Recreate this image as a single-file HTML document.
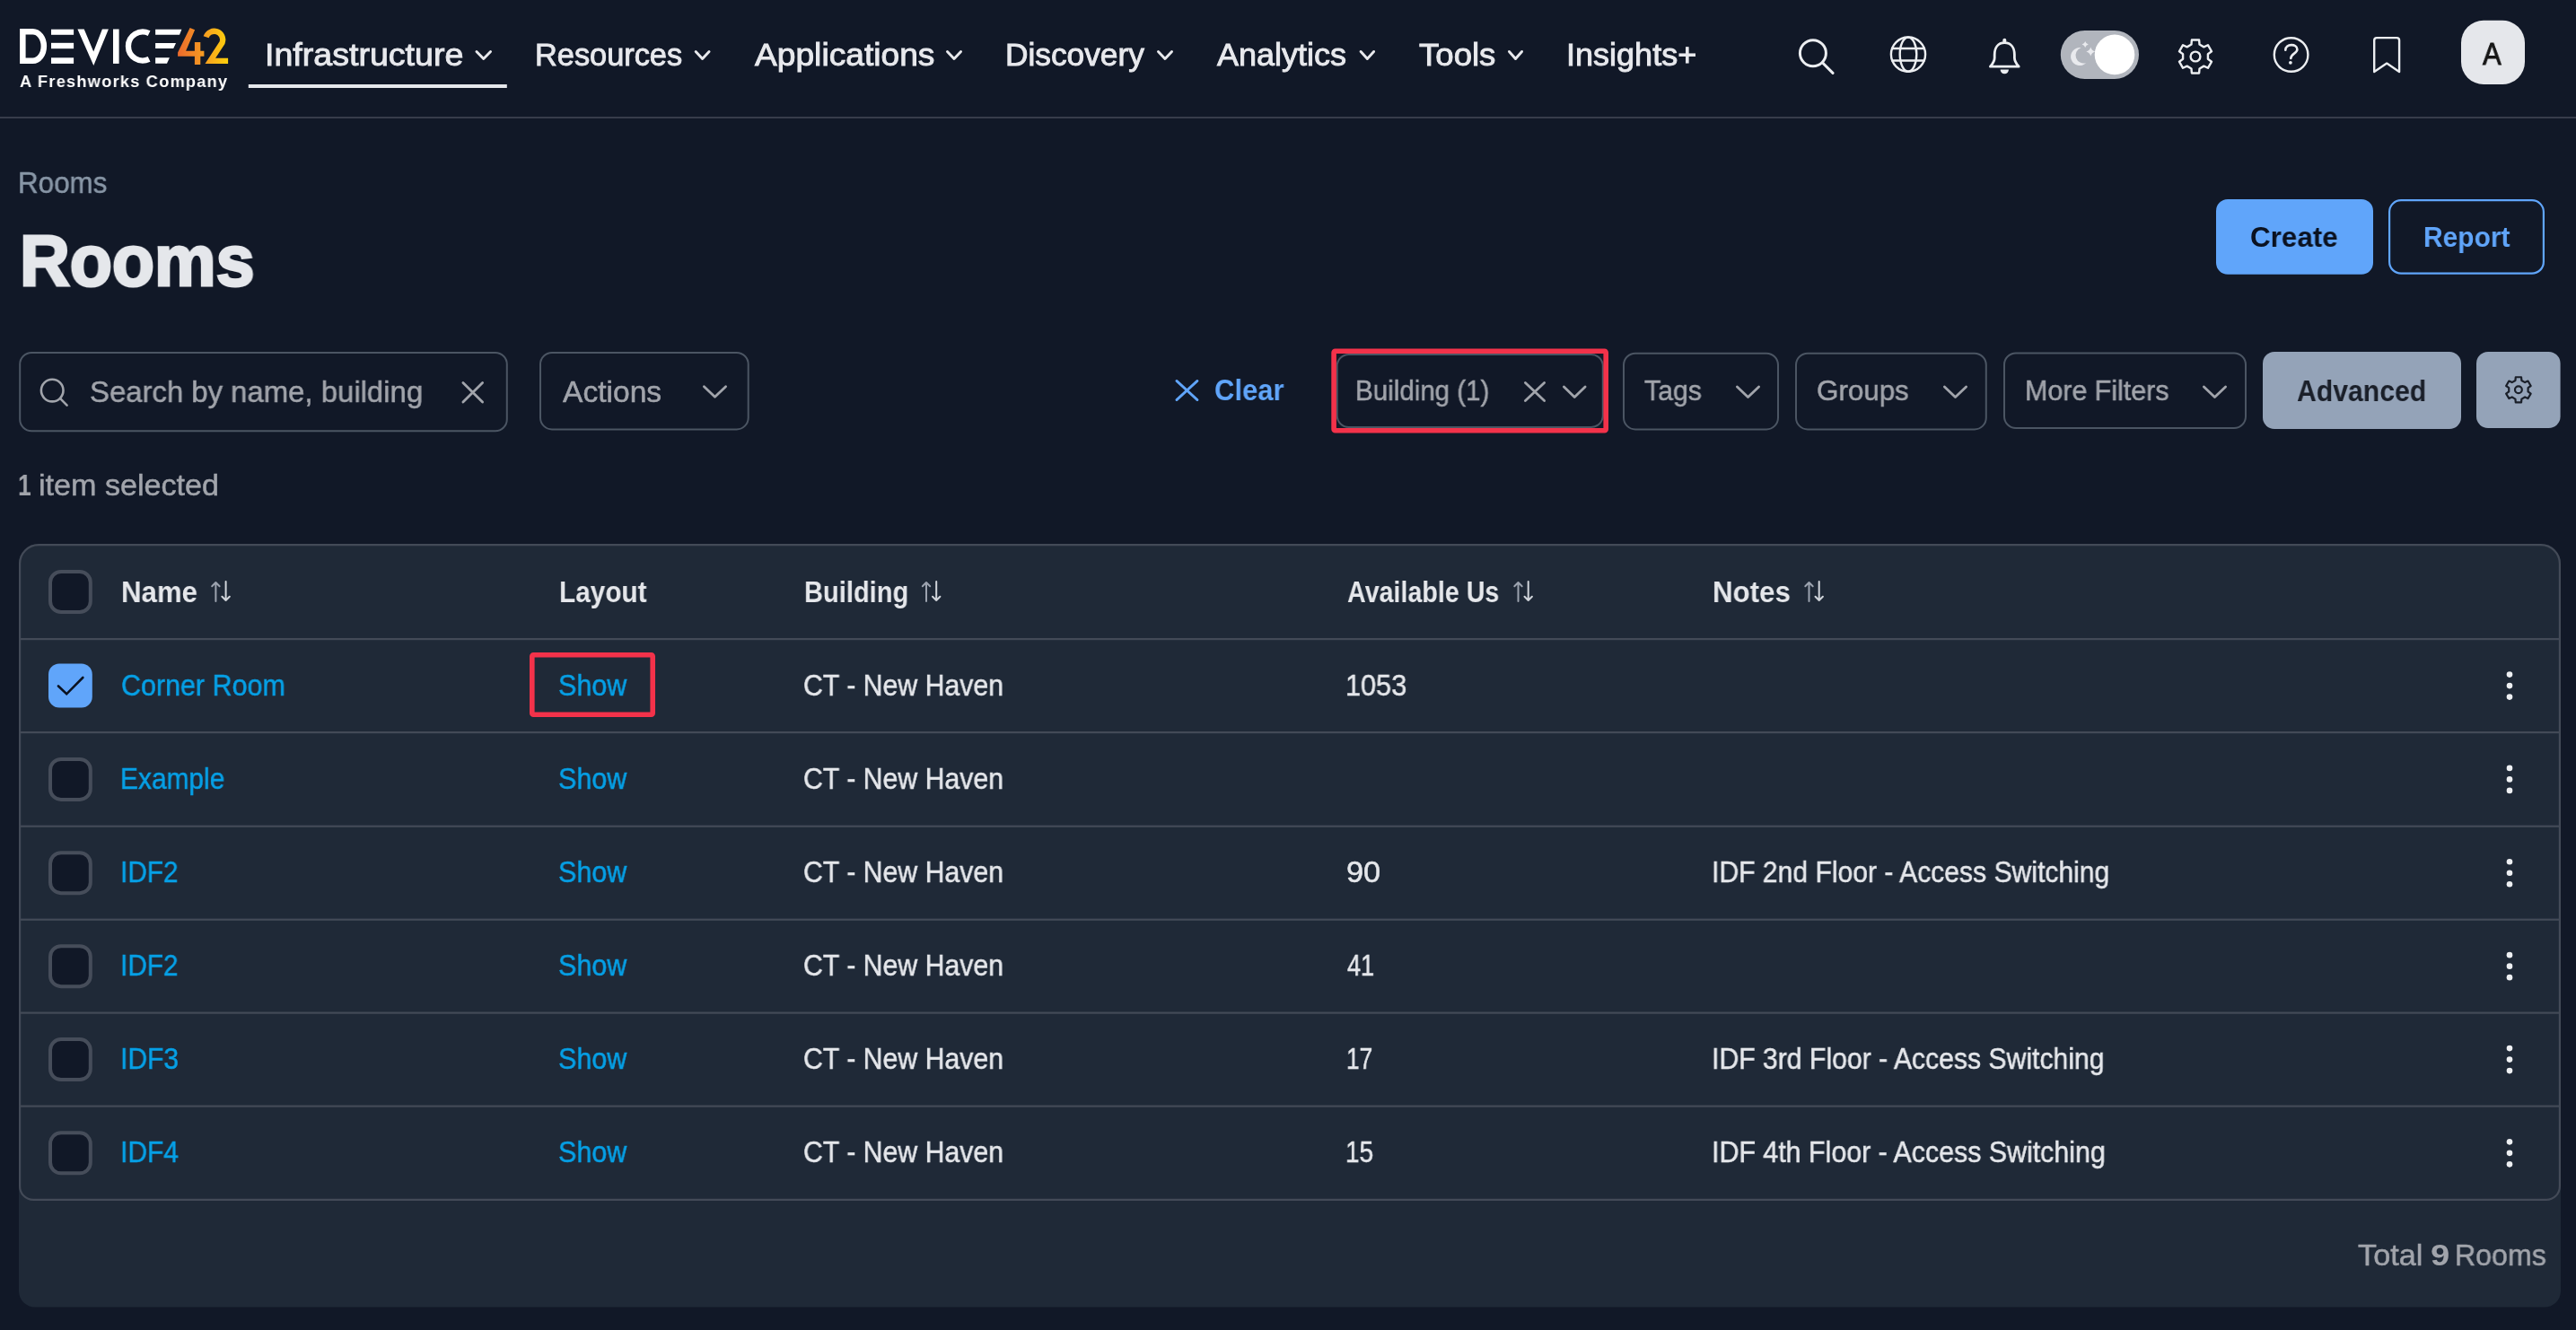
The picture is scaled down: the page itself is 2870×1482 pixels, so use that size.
<!DOCTYPE html>
<html><head><meta charset="utf-8"><title>Rooms</title>
<style>
html,body{margin:0;padding:0;background:#111827;width:2870px;height:1482px;overflow:hidden}
body{position:relative;font-family:"Liberation Sans",sans-serif}
svg.bg{position:absolute;left:0;top:0}
.t{position:absolute;white-space:nowrap;transform-origin:0 0;will-change:transform}
</style></head><body>
<svg class="bg" width="2870" height="1482" viewBox="0 0 2870 1482">
<rect x="0" y="130" width="2870" height="2" rx="0" fill="#373c4a"/>
<defs><linearGradient id="g42" x1="198" y1="0" x2="254" y2="0" gradientUnits="userSpaceOnUse"><stop offset="0" stop-color="#ec6a2c"/><stop offset="0.5" stop-color="#f59a22"/><stop offset="1" stop-color="#fdd00c"/></linearGradient></defs>
<path d="M25.35,35.15 H36.5 A12.35,16.3 0 0 1 36.5,67.75 H25.35 Z" fill="none" stroke="#ffffff" stroke-width="6.5"/>
<rect x="57" y="32.7" width="25.099999999999994" height="6.099999999999994" rx="0" fill="#ffffff"/>
<rect x="57" y="47.8" width="25.099999999999994" height="6.400000000000006" rx="0" fill="#ffffff"/>
<rect x="57" y="64.3" width="25.099999999999994" height="6.6000000000000085" rx="0" fill="#ffffff"/>
<polygon points="86.4,32.5 93.7,32.5 104.2,57.4 113.9,32.5 120.9,32.5 104.3,73.1" fill="#ffffff"/>
<rect x="126" y="32.5" width="6.599999999999994" height="38.400000000000006" rx="0" fill="#ffffff"/>
<path d="M166.1,37.1 A16.05,16.05 0 1 0 166.1,65.9" fill="none" stroke="#ffffff" stroke-width="6.3"/>
<polygon points="173.1,32.8 202.4,32.8 200,38.8 173.1,38.8" fill="#ffffff"/>
<polygon points="173.1,48 196,48 193.2,54 173.1,54" fill="#ffffff"/>
<polygon points="173.1,64.3 188.9,64.3 186,70.7 173.1,70.7" fill="#ffffff"/>
<polygon points="211.6,31.1 217.1,33.3 207.1,56.8 216.9,56.8 216.9,47 223.3,47 223.3,56.8 227.4,56.8 227.4,62.8 223.3,62.8 223.3,71.9 216.9,71.9 216.9,62.8 198.1,62.8 198.1,58.5" fill="url(#g42)"/>
<path d="M229.6,41.2 A9.3,9.3 0 1 1 247.6,47.5 L234.3,67.9 H254.1" fill="none" stroke="url(#g42)" stroke-width="6.3" stroke-linejoin="miter" stroke-miterlimit="10"/>
<path d="M530.95,57.45 L538.75,65.55 L546.55,57.45" fill="none" stroke="#e8e9ed" stroke-width="2.9" stroke-linecap="round" stroke-linejoin="round"/>
<path d="M775.1500000000001,57.45 L782.6,65.55 L790.05,57.45" fill="none" stroke="#e8e9ed" stroke-width="2.9" stroke-linecap="round" stroke-linejoin="round"/>
<path d="M1055.45,57.45 L1063.0,65.55 L1070.55,57.45" fill="none" stroke="#e8e9ed" stroke-width="2.9" stroke-linecap="round" stroke-linejoin="round"/>
<path d="M1290.45,57.45 L1298.0,65.55 L1305.55,57.45" fill="none" stroke="#e8e9ed" stroke-width="2.9" stroke-linecap="round" stroke-linejoin="round"/>
<path d="M1516.15,57.45 L1523.35,65.55 L1530.55,57.45" fill="none" stroke="#e8e9ed" stroke-width="2.9" stroke-linecap="round" stroke-linejoin="round"/>
<path d="M1681.45,57.45 L1688.5,65.55 L1695.55,57.45" fill="none" stroke="#e8e9ed" stroke-width="2.9" stroke-linecap="round" stroke-linejoin="round"/>
<rect x="276.8" y="94" width="287.99999999999994" height="4" rx="0" fill="#e5e7eb"/>
<circle cx="2019.9" cy="59.2" r="14.5" fill="none" stroke="#eceef1" stroke-width="3"/>
<path d="M2030.6,69.9 L2042,81.4" stroke="#eceef1" stroke-width="3" stroke-linecap="round"/>
<circle cx="2126" cy="60.6" r="19.1" fill="none" stroke="#eceef1" stroke-width="2.4"/>
<ellipse cx="2126" cy="60.6" rx="9.3" ry="19.1" fill="none" stroke="#eceef1" stroke-width="2.4"/>
<path d="M2107.5,54 H2144.5 M2107.5,67.5 H2144.5" stroke="#eceef1" stroke-width="2.4"/>
<path d="M2233.3,47.6 C2225.8,47.6 2222.2,53.5 2222.2,61 L2222.2,64.5 C2222.2,68.8 2219.6,71.6 2217.4,74.2 L2249.2,74.2 C2247,71.6 2244.4,68.8 2244.4,64.5 L2244.4,61 C2244.4,53.5 2240.8,47.6 2233.3,47.6 Z" fill="none" stroke="#eceef1" stroke-width="2.8" stroke-linejoin="round"/>
<rect x="2231.3" y="42.8" width="4" height="5" rx="2" fill="#eceef1"/>
<path d="M2228.6,77.6 H2238 A4.7,4.7 0 0 1 2228.6,77.6 Z" fill="#eceef1"/>
<rect x="2295.8" y="33.9" width="87.19999999999982" height="54.1" rx="27" fill="#b1b5bd"/>
<circle cx="2356" cy="60.9" r="22.3" fill="#ffffff"/>
<path d="M2318.5,53.2 A10,10 0 1 0 2324.3,70 A8.2,8.2 0 0 1 2318.5,53.2 Z" fill="#e9eaee"/>
<path d="M2323.2,45.9 Q2323.9919999999997,48.708 2326.7999999999997,49.5 Q2323.9919999999997,50.292 2323.2,53.1 Q2322.408,50.292 2319.6,49.5 Q2322.408,48.708 2323.2,45.9 Z" fill="#e9eaee"/>
<path d="M2329.3,52.5 Q2330.4,56.4 2334.3,57.5 Q2330.4,58.6 2329.3,62.5 Q2328.2000000000003,58.6 2324.3,57.5 Q2328.2000000000003,56.4 2329.3,52.5 Z" fill="#e9eaee"/>
<path d="M2441.47,49.54 L2441.88,44.56 L2450.12,44.56 L2450.53,49.54 L2455.39,52.35 L2459.91,50.21 L2464.04,57.35 L2459.92,60.19 L2459.92,65.81 L2464.04,68.65 L2459.91,75.79 L2455.39,73.65 L2450.53,76.46 L2450.12,81.44 L2441.88,81.44 L2441.47,76.46 L2436.61,73.65 L2432.09,75.79 L2427.96,68.65 L2432.08,65.81 L2432.08,60.19 L2427.96,57.35 L2432.09,50.21 L2436.61,52.35 Z" fill="none" stroke="#eceef1" stroke-width="2.4" stroke-linejoin="round"/>
<circle cx="2446" cy="63" r="5.4" fill="none" stroke="#eceef1" stroke-width="2.4"/>
<circle cx="2552.6" cy="61" r="18.8" fill="none" stroke="#eceef1" stroke-width="2.4"/>
<path d="M2546.3,55.8 C2546.3,48.5 2559.4,48.3 2559.4,55 C2559.4,59.5 2552.3,59.8 2552.3,65" fill="none" stroke="#eceef1" stroke-width="2.6" stroke-linecap="round"/>
<circle cx="2551.9" cy="69.8" r="1.9" fill="#eceef1"/>
<path d="M2645.2,80 V45 Q2645.2,42.1 2648,42.1 H2670.3 Q2673.1,42.1 2673.1,45 V80 L2659.2,70.6 Z" fill="none" stroke="#eceef1" stroke-width="2.4" stroke-linejoin="round"/>
<rect x="2742" y="22.8" width="71" height="71.2" rx="25" fill="#e5e7eb"/>
<rect x="2469" y="222" width="175" height="83.80000000000001" rx="13" fill="#60a5fa"/>
<rect x="2662.1" y="223.1" width="171.80000000000018" height="81.6" rx="13" fill="none" stroke="#60a5fa" stroke-width="2.2"/>
<rect x="22.2" y="393.0" width="542.5999999999999" height="87.30000000000001" rx="13" fill="none" stroke="#4b5563" stroke-width="2"/>
<circle cx="58.2" cy="435.1" r="12.3" fill="none" stroke="#a1a4ab" stroke-width="2.6"/>
<path d="M67.2,444.2 L74.6,451.6" stroke="#a1a4ab" stroke-width="2.6" stroke-linecap="round"/>
<path d="M515.9,426.4 L537.6,448.0 M537.6,426.4 L515.9,448.0" fill="none" stroke="#a1a4ab" stroke-width="2.8" stroke-linecap="round"/>
<rect x="602.0" y="393.0" width="231.70000000000005" height="85.39999999999998" rx="13" fill="none" stroke="#4b5563" stroke-width="2"/>
<path d="M784.4,430.7 L796.5,442.3 L808.6,430.7" fill="none" stroke="#a1a4ab" stroke-width="2.8" stroke-linecap="round" stroke-linejoin="round"/>
<path d="M1310.9,424.4 L1334.0,445.6 M1334.0,424.4 L1310.9,445.6" fill="none" stroke="#60a5fa" stroke-width="2.8" stroke-linecap="round"/>
<rect x="1489.7" y="395.0" width="296.0999999999999" height="81.0" rx="13" fill="none" stroke="#4b5563" stroke-width="2"/>
<path d="M1699.4,426.4 L1720.6,446.6 M1720.6,426.4 L1699.4,446.6" fill="none" stroke="#a1a4ab" stroke-width="2.8" stroke-linecap="round"/>
<path d="M1742.4,430.9 L1754.25,442.6 L1766.1,430.9" fill="none" stroke="#a1a4ab" stroke-width="2.8" stroke-linecap="round" stroke-linejoin="round"/>
<rect x="1486.1" y="391.2" width="303.10000000000014" height="88.5" rx="1.5" fill="none" stroke="#f3324a" stroke-width="5.6"/>
<rect x="1809.0" y="393.7" width="172.0" height="84.69999999999999" rx="13" fill="none" stroke="#4b5563" stroke-width="2"/>
<path d="M1935.4,430.9 L1947.5,442.6 L1959.6,430.9" fill="none" stroke="#a1a4ab" stroke-width="2.8" stroke-linecap="round" stroke-linejoin="round"/>
<rect x="2001.0" y="393.7" width="211.80000000000018" height="84.69999999999999" rx="13" fill="none" stroke="#4b5563" stroke-width="2"/>
<path d="M2166.4,430.9 L2178.5,442.6 L2190.6,430.9" fill="none" stroke="#a1a4ab" stroke-width="2.8" stroke-linecap="round" stroke-linejoin="round"/>
<rect x="2233.0" y="393.4" width="269.0" height="83.60000000000002" rx="13" fill="none" stroke="#4b5563" stroke-width="2"/>
<path d="M2455.4,430.9 L2467.5,442.6 L2479.6,430.9" fill="none" stroke="#a1a4ab" stroke-width="2.8" stroke-linecap="round" stroke-linejoin="round"/>
<rect x="2521" y="392" width="221" height="86" rx="13" fill="#94a3b8"/>
<rect x="2759" y="392" width="93.59999999999991" height="85" rx="13" fill="#94a3b8"/>
<path d="M2802.42,423.97 L2802.76,420.25 L2809.04,420.25 L2809.38,423.97 L2813.11,426.12 L2816.50,424.55 L2819.64,429.99 L2816.58,432.15 L2816.58,436.45 L2819.64,438.61 L2816.50,444.05 L2813.11,442.48 L2809.38,444.63 L2809.04,448.35 L2802.76,448.35 L2802.42,444.63 L2798.69,442.48 L2795.30,444.05 L2792.16,438.61 L2795.22,436.45 L2795.22,432.15 L2792.16,429.99 L2795.30,424.55 L2798.69,426.12 Z" fill="none" stroke="#1a1f29" stroke-width="2.2" stroke-linejoin="round"/>
<circle cx="2805.9" cy="434.3" r="3.9" fill="none" stroke="#1a1f29" stroke-width="2.2"/>
<path d="M43,606 H2831 A22,22 0 0 1 2853,628 V1438.5 A18,18 0 0 1 2835,1456.5 H39 A18,18 0 0 1 21,1438.5 V628 A22,22 0 0 1 43,606 Z" fill="#1f2937"/>
<path d="M43.1,607.1 H2830.9 A21,21 0 0 1 2851.9,628.1 V1321.9 A15,15 0 0 1 2836.9,1336.9 H37.1 A15,15 0 0 1 22.1,1321.9 V628.1 A21,21 0 0 1 43.1,607.1 Z" fill="none" stroke="#434a57" stroke-width="2.2"/>
<rect x="22" y="711" width="2830" height="2.2000000000000455" rx="0" fill="#434a57"/>
<rect x="22" y="815" width="2830" height="2.2000000000000455" rx="0" fill="#434a57"/>
<rect x="22" y="919.6" width="2830" height="2.2000000000000455" rx="0" fill="#434a57"/>
<rect x="22" y="1023.6" width="2830" height="2.199999999999932" rx="0" fill="#434a57"/>
<rect x="22" y="1127.5" width="2830" height="2.2000000000000455" rx="0" fill="#434a57"/>
<rect x="22" y="1231.5" width="2830" height="2.2000000000000455" rx="0" fill="#434a57"/>
<rect x="56.0" y="637.0" width="44.8" height="45.0" rx="12" fill="#111827" stroke="#464d5a" stroke-width="4"/>
<path d="M240.4,670 V649 M236.20000000000002,653.2 L240.4,649 L244.6,653.2" fill="none" stroke="#9ca3af" stroke-width="2" stroke-linecap="round" stroke-linejoin="round"/>
<path d="M251.6,648 V669 M247.4,664.8 L251.6,669 L255.79999999999998,664.8" fill="none" stroke="#d1d5db" stroke-width="2" stroke-linecap="round" stroke-linejoin="round"/>
<path d="M1032,670 V649 M1027.8,653.2 L1032,649 L1036.2,653.2" fill="none" stroke="#9ca3af" stroke-width="2" stroke-linecap="round" stroke-linejoin="round"/>
<path d="M1043.2,648 V669 M1039.0,664.8 L1043.2,669 L1047.4,664.8" fill="none" stroke="#d1d5db" stroke-width="2" stroke-linecap="round" stroke-linejoin="round"/>
<path d="M1691.5,670 V649 M1687.3,653.2 L1691.5,649 L1695.7,653.2" fill="none" stroke="#9ca3af" stroke-width="2" stroke-linecap="round" stroke-linejoin="round"/>
<path d="M1702.7,648 V669 M1698.5,664.8 L1702.7,669 L1706.9,664.8" fill="none" stroke="#d1d5db" stroke-width="2" stroke-linecap="round" stroke-linejoin="round"/>
<path d="M2015.5,670 V649 M2011.3,653.2 L2015.5,649 L2019.7,653.2" fill="none" stroke="#9ca3af" stroke-width="2" stroke-linecap="round" stroke-linejoin="round"/>
<path d="M2026.7,648 V669 M2022.5,664.8 L2026.7,669 L2030.9,664.8" fill="none" stroke="#d1d5db" stroke-width="2" stroke-linecap="round" stroke-linejoin="round"/>
<rect x="54" y="739.6" width="48.8" height="49.0" rx="12" fill="#60a5fa"/>
<path d="M65,764.5 L74.2,773.3 L92.3,755" fill="none" stroke="#0b1220" stroke-width="2.6" stroke-linecap="round" stroke-linejoin="miter"/>
<circle cx="2796" cy="751.60" r="3.3" fill="#eef0f3"/>
<circle cx="2796" cy="764.10" r="3.3" fill="#eef0f3"/>
<circle cx="2796" cy="776.60" r="3.3" fill="#eef0f3"/>
<rect x="56.0" y="845.9000000000001" width="44.8" height="45.0" rx="12" fill="#111827" stroke="#464d5a" stroke-width="4"/>
<circle cx="2796" cy="855.90" r="3.3" fill="#eef0f3"/>
<circle cx="2796" cy="868.40" r="3.3" fill="#eef0f3"/>
<circle cx="2796" cy="880.90" r="3.3" fill="#eef0f3"/>
<rect x="56.0" y="950.2" width="44.8" height="45.0" rx="12" fill="#111827" stroke="#464d5a" stroke-width="4"/>
<circle cx="2796" cy="960.20" r="3.3" fill="#eef0f3"/>
<circle cx="2796" cy="972.70" r="3.3" fill="#eef0f3"/>
<circle cx="2796" cy="985.20" r="3.3" fill="#eef0f3"/>
<rect x="56.0" y="1054.15" width="44.8" height="45.0" rx="12" fill="#111827" stroke="#464d5a" stroke-width="4"/>
<circle cx="2796" cy="1064.15" r="3.3" fill="#eef0f3"/>
<circle cx="2796" cy="1076.65" r="3.3" fill="#eef0f3"/>
<circle cx="2796" cy="1089.15" r="3.3" fill="#eef0f3"/>
<rect x="56.0" y="1158.1" width="44.8" height="45.0" rx="12" fill="#111827" stroke="#464d5a" stroke-width="4"/>
<circle cx="2796" cy="1168.10" r="3.3" fill="#eef0f3"/>
<circle cx="2796" cy="1180.60" r="3.3" fill="#eef0f3"/>
<circle cx="2796" cy="1193.10" r="3.3" fill="#eef0f3"/>
<rect x="56.0" y="1262.35" width="44.8" height="45.0" rx="12" fill="#111827" stroke="#464d5a" stroke-width="4"/>
<circle cx="2796" cy="1272.35" r="3.3" fill="#eef0f3"/>
<circle cx="2796" cy="1284.85" r="3.3" fill="#eef0f3"/>
<circle cx="2796" cy="1297.35" r="3.3" fill="#eef0f3"/>
<rect x="592.8" y="729.8" width="134.4000000000001" height="66.40000000000009" rx="1.5" fill="none" stroke="#f3324a" stroke-width="5.6"/>
</svg>
<div class="t" style="left:22.25px;top:82.29px;font-size:18.84px;line-height:18.84px;color:#ffffff;font-weight:700;letter-spacing:1.232px;transform:scaleX(0.9700);">A Freshworks Company</div>
<div class="t" style="left:294.87px;top:43.78px;font-size:34.20px;line-height:34.20px;color:#e8e9ed;font-weight:400;transform:scaleX(1.0988);-webkit-text-stroke:0.9px #e8e9ed;">Infrastructure</div>
<div class="t" style="left:596.40px;top:43.78px;font-size:34.20px;line-height:34.20px;color:#e8e9ed;font-weight:400;transform:scaleX(1.0045);-webkit-text-stroke:0.9px #e8e9ed;">Resources</div>
<div class="t" style="left:840.95px;top:43.78px;font-size:34.20px;line-height:34.20px;color:#e8e9ed;font-weight:400;transform:scaleX(1.0870);-webkit-text-stroke:0.9px #e8e9ed;">Applications</div>
<div class="t" style="left:1120.13px;top:43.78px;font-size:34.20px;line-height:34.20px;color:#e8e9ed;font-weight:400;transform:scaleX(1.0318);-webkit-text-stroke:0.9px #e8e9ed;">Discovery</div>
<div class="t" style="left:1356.45px;top:43.78px;font-size:34.20px;line-height:34.20px;color:#e8e9ed;font-weight:400;transform:scaleX(1.0528);-webkit-text-stroke:0.9px #e8e9ed;">Analytics</div>
<div class="t" style="left:1581.22px;top:43.78px;font-size:34.20px;line-height:34.20px;color:#e8e9ed;font-weight:400;transform:scaleX(1.0703);-webkit-text-stroke:0.9px #e8e9ed;">Tools</div>
<div class="t" style="left:1744.71px;top:43.78px;font-size:34.20px;line-height:34.20px;color:#e8e9ed;font-weight:400;transform:scaleX(1.0540);-webkit-text-stroke:0.9px #e8e9ed;">Insights+</div>
<div class="t" style="left:2766.00px;top:41.94px;font-size:35.36px;line-height:35.36px;color:#161616;font-weight:400;transform:scaleX(0.8784);-webkit-text-stroke:0.9px #161616;">A</div>
<div class="t" style="left:20.29px;top:188.08px;font-size:32.61px;line-height:32.61px;color:#8896a6;font-weight:400;transform:scaleX(0.9622);-webkit-text-stroke:0.50px #8896a6;">Rooms</div>
<div class="t" style="left:22.10px;top:249.95px;font-size:80.29px;line-height:80.29px;color:#e5e7eb;font-weight:700;transform:scaleX(0.9611);-webkit-text-stroke:3px #e5e7eb;">Rooms</div>
<div class="t" style="left:2507.34px;top:248.94px;font-size:31.59px;line-height:31.59px;color:#0b1220;font-weight:700;transform:scaleX(0.9933);">Create</div>
<div class="t" style="left:2699.90px;top:248.94px;font-size:31.59px;line-height:31.59px;color:#60a5fa;font-weight:700;transform:scaleX(0.9475);">Report</div>
<div class="t" style="left:100.35px;top:420.09px;font-size:33.19px;line-height:33.19px;color:#a1a4ab;font-weight:400;transform:scaleX(0.9913);-webkit-text-stroke:0.50px #a1a4ab;">Search by name, building</div>
<div class="t" style="left:627.00px;top:420.63px;font-size:32.32px;line-height:32.32px;color:#a1a4ab;font-weight:400;transform:scaleX(1.0390);-webkit-text-stroke:0.50px #a1a4ab;">Actions</div>
<div class="t" style="left:1352.76px;top:419.41px;font-size:32.46px;line-height:32.46px;color:#60a5fa;font-weight:700;transform:scaleX(0.9555);">Clear</div>
<div class="t" style="left:1510.14px;top:420.47px;font-size:31.45px;line-height:31.45px;color:#a1a4ab;font-weight:400;transform:scaleX(0.9397);-webkit-text-stroke:0.50px #a1a4ab;">Building (1)</div>
<div class="t" style="left:1832.40px;top:420.47px;font-size:31.45px;line-height:31.45px;color:#a1a4ab;font-weight:400;transform:scaleX(0.9617);-webkit-text-stroke:0.50px #a1a4ab;">Tags</div>
<div class="t" style="left:2024.43px;top:420.47px;font-size:31.45px;line-height:31.45px;color:#a1a4ab;font-weight:400;transform:scaleX(0.9968);-webkit-text-stroke:0.50px #a1a4ab;">Groups</div>
<div class="t" style="left:2255.57px;top:420.47px;font-size:31.45px;line-height:31.45px;color:#a1a4ab;font-weight:400;transform:scaleX(0.9675);-webkit-text-stroke:0.50px #a1a4ab;">More Filters</div>
<div class="t" style="left:2559.09px;top:420.01px;font-size:32.46px;line-height:32.46px;color:#1a1f29;font-weight:700;transform:scaleX(0.9300);">Advanced</div>
<div class="t" style="left:19.90px;top:524.17px;font-size:33.91px;line-height:33.91px;color:#a1a4ab;font-weight:700;transform:scaleX(0.7842);">1</div>
<div class="t" style="left:42.61px;top:524.17px;font-size:33.91px;line-height:33.91px;color:#a1a4ab;font-weight:400;transform:scaleX(1.0065);-webkit-text-stroke:0.50px #a1a4ab;">item selected</div>
<div class="t" style="left:135.21px;top:642.71px;font-size:33.04px;line-height:33.04px;color:#e5e7eb;font-weight:700;transform:scaleX(0.9449);">Name</div>
<div class="t" style="left:622.92px;top:642.71px;font-size:33.04px;line-height:33.04px;color:#e5e7eb;font-weight:700;transform:scaleX(0.9013);">Layout</div>
<div class="t" style="left:895.77px;top:642.71px;font-size:33.04px;line-height:33.04px;color:#e5e7eb;font-weight:700;transform:scaleX(0.8797);">Building</div>
<div class="t" style="left:1500.74px;top:642.71px;font-size:33.04px;line-height:33.04px;color:#e5e7eb;font-weight:700;transform:scaleX(0.8675);">Available Us</div>
<div class="t" style="left:1907.81px;top:642.71px;font-size:33.04px;line-height:33.04px;color:#e5e7eb;font-weight:700;transform:scaleX(0.9464);">Notes</div>
<div class="t" style="left:135.08px;top:747.74px;font-size:32.90px;line-height:32.90px;color:#06a0e6;font-weight:400;transform:scaleX(0.9258);-webkit-text-stroke:0.50px #06a0e6;">Corner Room</div>
<div class="t" style="left:622.48px;top:747.74px;font-size:32.90px;line-height:32.90px;color:#06a0e6;font-weight:400;transform:scaleX(0.9268);-webkit-text-stroke:0.50px #06a0e6;">Show</div>
<div class="t" style="left:895.49px;top:747.74px;font-size:32.90px;line-height:32.90px;color:#e5e7eb;font-weight:400;transform:scaleX(0.9194);-webkit-text-stroke:0.50px #e5e7eb;">CT - New Haven</div>
<div class="t" style="left:1499.15px;top:747.74px;font-size:32.90px;line-height:32.90px;color:#e5e7eb;font-weight:400;transform:scaleX(0.9322);-webkit-text-stroke:0.50px #e5e7eb;">1053</div>
<div class="t" style="left:134.21px;top:852.04px;font-size:32.90px;line-height:32.90px;color:#06a0e6;font-weight:400;transform:scaleX(0.9087);-webkit-text-stroke:0.50px #06a0e6;">Example</div>
<div class="t" style="left:622.48px;top:852.04px;font-size:32.90px;line-height:32.90px;color:#06a0e6;font-weight:400;transform:scaleX(0.9268);-webkit-text-stroke:0.50px #06a0e6;">Show</div>
<div class="t" style="left:895.49px;top:852.04px;font-size:32.90px;line-height:32.90px;color:#e5e7eb;font-weight:400;transform:scaleX(0.9194);-webkit-text-stroke:0.50px #e5e7eb;">CT - New Haven</div>
<div class="t" style="left:133.92px;top:956.34px;font-size:32.90px;line-height:32.90px;color:#06a0e6;font-weight:400;transform:scaleX(0.9044);-webkit-text-stroke:0.50px #06a0e6;">IDF2</div>
<div class="t" style="left:622.48px;top:956.34px;font-size:32.90px;line-height:32.90px;color:#06a0e6;font-weight:400;transform:scaleX(0.9268);-webkit-text-stroke:0.50px #06a0e6;">Show</div>
<div class="t" style="left:895.49px;top:956.34px;font-size:32.90px;line-height:32.90px;color:#e5e7eb;font-weight:400;transform:scaleX(0.9194);-webkit-text-stroke:0.50px #e5e7eb;">CT - New Haven</div>
<div class="t" style="left:1499.88px;top:956.34px;font-size:32.90px;line-height:32.90px;color:#e5e7eb;font-weight:400;transform:scaleX(1.0447);-webkit-text-stroke:0.50px #e5e7eb;">90</div>
<div class="t" style="left:1907.29px;top:956.34px;font-size:32.90px;line-height:32.90px;color:#e5e7eb;font-weight:400;transform:scaleX(0.9152);-webkit-text-stroke:0.50px #e5e7eb;">IDF 2nd Floor - Access Switching</div>
<div class="t" style="left:133.92px;top:1060.29px;font-size:32.90px;line-height:32.90px;color:#06a0e6;font-weight:400;transform:scaleX(0.9044);-webkit-text-stroke:0.50px #06a0e6;">IDF2</div>
<div class="t" style="left:622.48px;top:1060.29px;font-size:32.90px;line-height:32.90px;color:#06a0e6;font-weight:400;transform:scaleX(0.9268);-webkit-text-stroke:0.50px #06a0e6;">Show</div>
<div class="t" style="left:895.49px;top:1060.29px;font-size:32.90px;line-height:32.90px;color:#e5e7eb;font-weight:400;transform:scaleX(0.9194);-webkit-text-stroke:0.50px #e5e7eb;">CT - New Haven</div>
<div class="t" style="left:1501.06px;top:1060.29px;font-size:32.90px;line-height:32.90px;color:#e5e7eb;font-weight:400;transform:scaleX(0.8222);-webkit-text-stroke:0.50px #e5e7eb;">41</div>
<div class="t" style="left:133.90px;top:1164.24px;font-size:32.90px;line-height:32.90px;color:#06a0e6;font-weight:400;transform:scaleX(0.9119);-webkit-text-stroke:0.50px #06a0e6;">IDF3</div>
<div class="t" style="left:622.48px;top:1164.24px;font-size:32.90px;line-height:32.90px;color:#06a0e6;font-weight:400;transform:scaleX(0.9268);-webkit-text-stroke:0.50px #06a0e6;">Show</div>
<div class="t" style="left:895.49px;top:1164.24px;font-size:32.90px;line-height:32.90px;color:#e5e7eb;font-weight:400;transform:scaleX(0.9194);-webkit-text-stroke:0.50px #e5e7eb;">CT - New Haven</div>
<div class="t" style="left:1499.50px;top:1164.24px;font-size:32.90px;line-height:32.90px;color:#e5e7eb;font-weight:400;transform:scaleX(0.7983);-webkit-text-stroke:0.50px #e5e7eb;">17</div>
<div class="t" style="left:1907.28px;top:1164.24px;font-size:32.90px;line-height:32.90px;color:#e5e7eb;font-weight:400;transform:scaleX(0.9172);-webkit-text-stroke:0.50px #e5e7eb;">IDF 3rd Floor - Access Switching</div>
<div class="t" style="left:133.90px;top:1268.49px;font-size:32.90px;line-height:32.90px;color:#06a0e6;font-weight:400;transform:scaleX(0.9104);-webkit-text-stroke:0.50px #06a0e6;">IDF4</div>
<div class="t" style="left:622.48px;top:1268.49px;font-size:32.90px;line-height:32.90px;color:#06a0e6;font-weight:400;transform:scaleX(0.9268);-webkit-text-stroke:0.50px #06a0e6;">Show</div>
<div class="t" style="left:895.49px;top:1268.49px;font-size:32.90px;line-height:32.90px;color:#e5e7eb;font-weight:400;transform:scaleX(0.9194);-webkit-text-stroke:0.50px #e5e7eb;">CT - New Haven</div>
<div class="t" style="left:1499.36px;top:1268.49px;font-size:32.90px;line-height:32.90px;color:#e5e7eb;font-weight:400;transform:scaleX(0.8511);-webkit-text-stroke:0.50px #e5e7eb;">15</div>
<div class="t" style="left:1907.27px;top:1268.49px;font-size:32.90px;line-height:32.90px;color:#e5e7eb;font-weight:400;transform:scaleX(0.9232);-webkit-text-stroke:0.50px #e5e7eb;">IDF 4th Floor - Access Switching</div>
<div class="t" style="left:2627.31px;top:1382.27px;font-size:33.33px;line-height:33.33px;color:#a1a4ab;font-weight:400;transform:scaleX(1.0286);-webkit-text-stroke:0.50px #a1a4ab;">Total</div>
<div class="t" style="left:2707.66px;top:1382.27px;font-size:33.33px;line-height:33.33px;color:#a1a4ab;font-weight:700;transform:scaleX(1.1449);">9</div>
<div class="t" style="left:2735.43px;top:1382.27px;font-size:33.33px;line-height:33.33px;color:#a1a4ab;font-weight:400;transform:scaleX(0.9639);-webkit-text-stroke:0.50px #a1a4ab;">Rooms</div>
</body></html>
